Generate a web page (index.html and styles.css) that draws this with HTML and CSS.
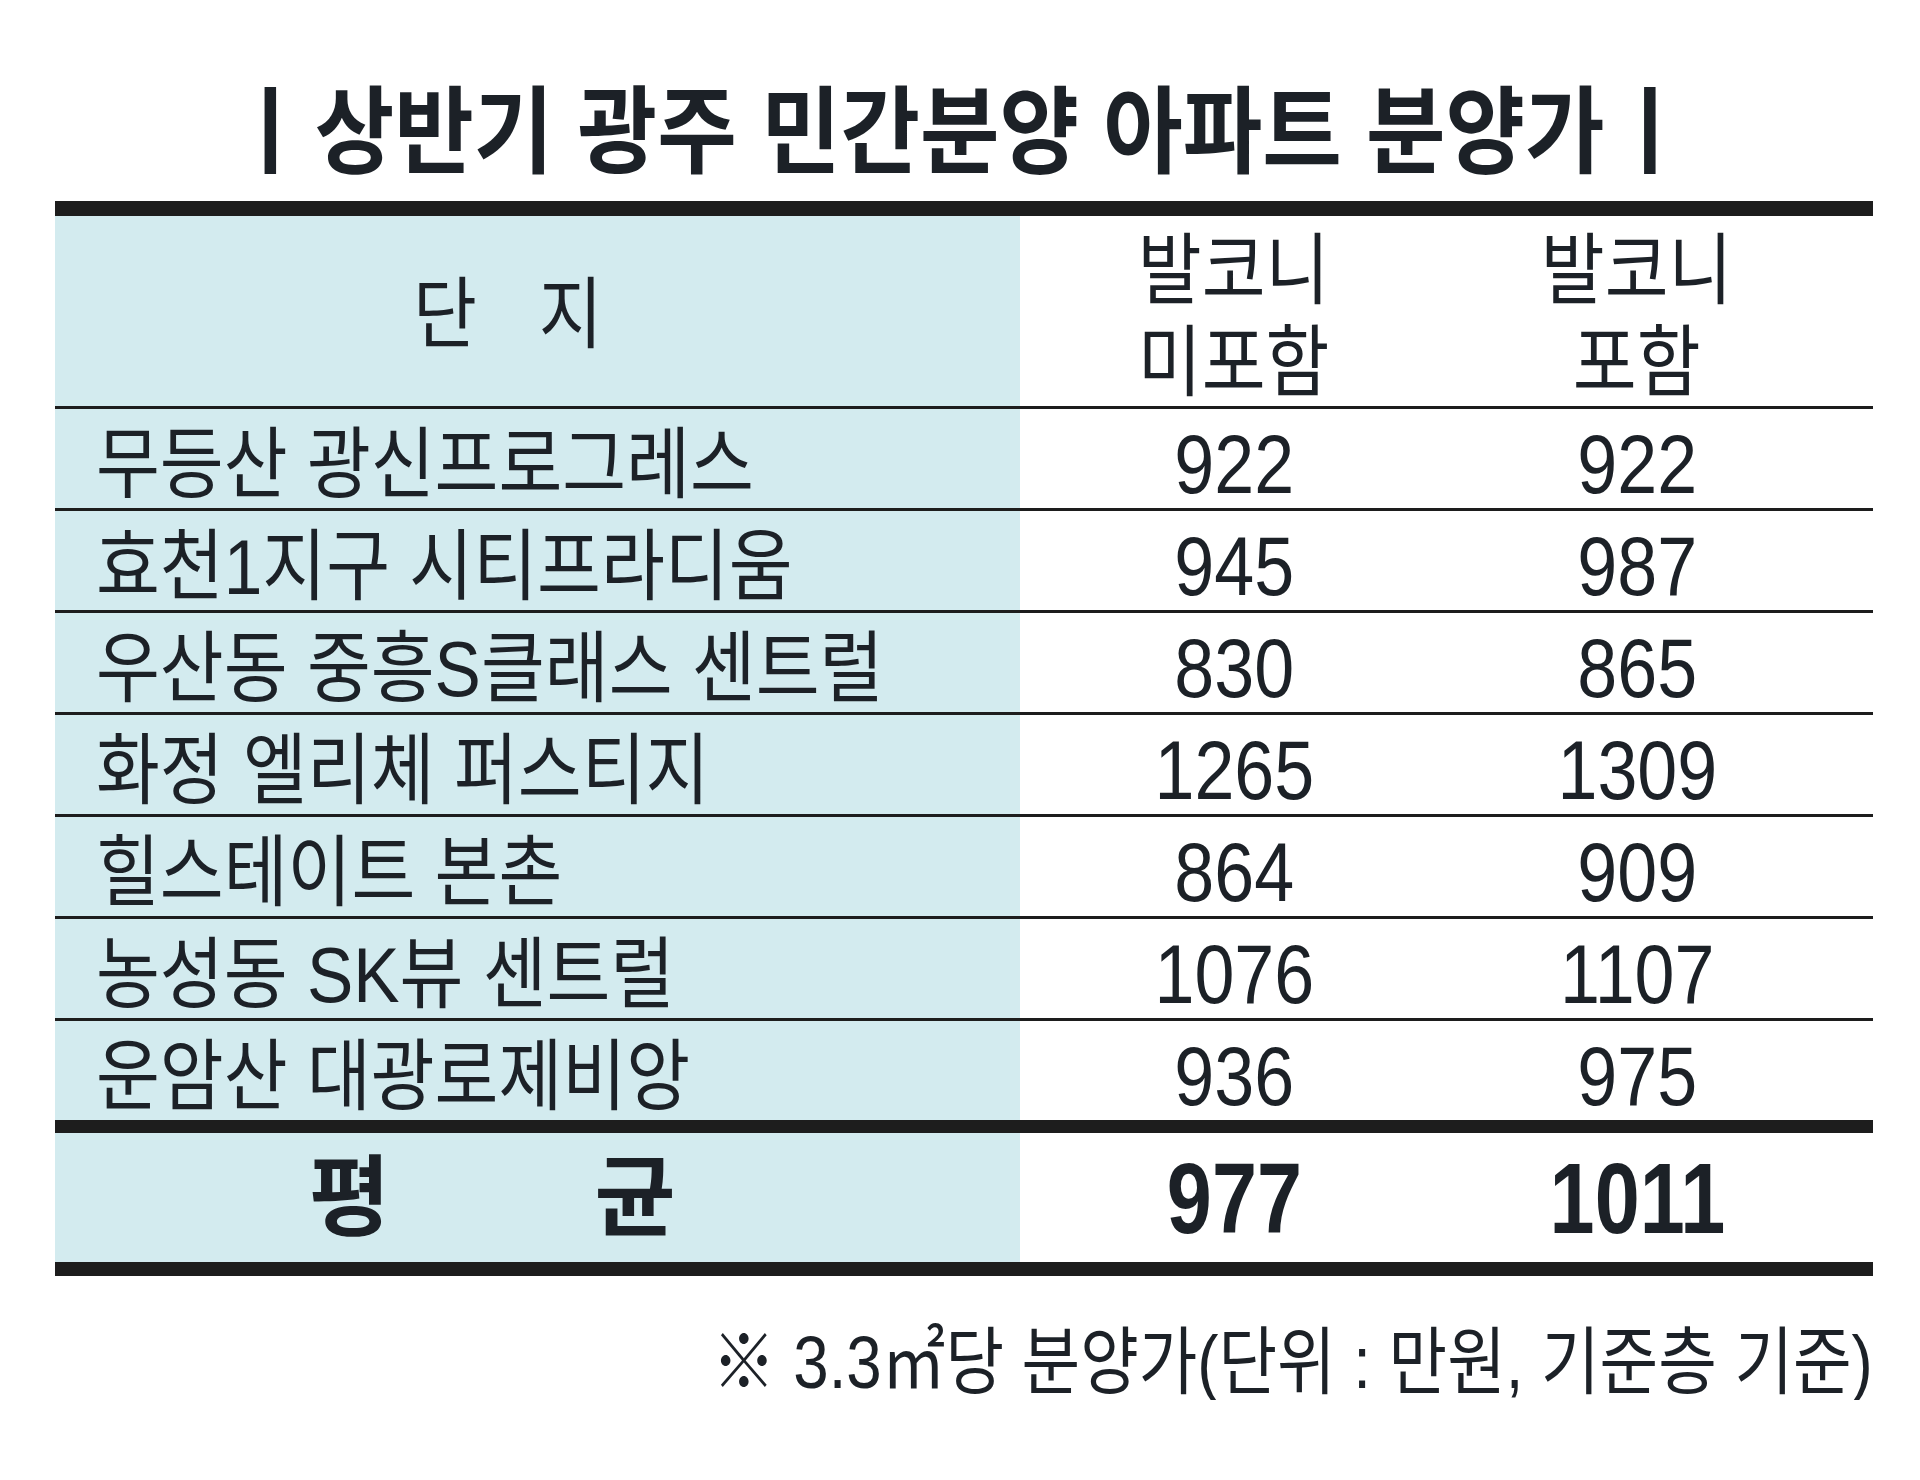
FILE: index.html
```html
<!DOCTYPE html>
<html lang="ko">
<head>
<meta charset="utf-8">
<title>상반기 광주 민간분양 아파트 분양가</title>
<link rel="stylesheet" href="styles.css">
</head>
<body>
<div class="title-wrap">
  <h1 class="title"><span class="bar">ㅣ </span>상반기 광주 민간분양 아파트 분양가<span class="bar"> ㅣ</span></h1>
</div>
<div class="table">
  <div class="row head">
    <div class="cell name"><span class="txt spaced">단 지</span></div>
    <div class="cell val"><span class="txt two">발코니<br>미포함</span></div>
    <div class="cell val v2"><span class="txt two">발코니<br>포함</span></div>
  </div>
  <div class="row">
    <div class="cell name"><span class="txt">무등산 광신프로그레스</span></div>
    <div class="cell val"><span class="num">922</span></div>
    <div class="cell val v2"><span class="num">922</span></div>
  </div>
  <div class="row">
    <div class="cell name"><span class="txt">효천1지구 시티프라디움</span></div>
    <div class="cell val"><span class="num">945</span></div>
    <div class="cell val v2"><span class="num">987</span></div>
  </div>
  <div class="row">
    <div class="cell name"><span class="txt">우산동 중흥S클래스 센트럴</span></div>
    <div class="cell val"><span class="num">830</span></div>
    <div class="cell val v2"><span class="num">865</span></div>
  </div>
  <div class="row">
    <div class="cell name"><span class="txt">화정 엘리체 퍼스티지</span></div>
    <div class="cell val"><span class="num">1265</span></div>
    <div class="cell val v2"><span class="num">1309</span></div>
  </div>
  <div class="row">
    <div class="cell name"><span class="txt">힐스테이트 본촌</span></div>
    <div class="cell val"><span class="num">864</span></div>
    <div class="cell val v2"><span class="num">909</span></div>
  </div>
  <div class="row">
    <div class="cell name"><span class="txt">농성동 SK뷰 센트럴</span></div>
    <div class="cell val"><span class="num">1076</span></div>
    <div class="cell val v2"><span class="num">1107</span></div>
  </div>
  <div class="row last">
    <div class="cell name"><span class="txt">운암산 대광로제비앙</span></div>
    <div class="cell val"><span class="num">936</span></div>
    <div class="cell val v2"><span class="num">975</span></div>
  </div>
  <div class="row total">
    <div class="cell name"><span class="avg">평 균</span></div>
    <div class="cell val"><span class="num bold">977</span></div>
    <div class="cell val v2"><span class="num bold">1011</span></div>
  </div>
</div>
<p class="note"><span class="note-t">※ 3.3㎡당 분양가(단위 : 만원, 기준층 기준)</span></p>
</body>
</html>
```
FILE: styles.css
```css
html, body {
  margin: 0;
  padding: 0;
  background: #ffffff;
}
body {
  color: #1c2127;
  font-family: "Liberation Sans", "Noto Sans CJK KR", sans-serif;
}
.title-wrap {
  height: 201px;
  box-sizing: border-box;
  padding-top: 77px;
  text-align: center;
}
.title {
  display: inline-block;
  margin: 0;
  font-family: "Noto Sans CJK KR", sans-serif;
  font-weight: 700;
  font-size: 95px;
  line-height: 1;
  white-space: nowrap;
  transform: scaleX(0.91);
}
.bar {
  word-spacing: -21px;
}
.table {
  margin-left: 55px;
  width: 1818px;
  border-top: 15px solid #1d1d1d;
  border-bottom: 14px solid #1d1d1d;
}
.row {
  display: grid;
  grid-template-columns: 965px 428px 425px;
  grid-template-rows: 100%;
  height: 99px;
  border-bottom: 3px solid #1d1d1d;
}
.row.head {
  height: 190px;
}
.row.last {
  border-bottom: 13px solid #1d1d1d;
}
.row.total {
  height: 129px;
  border-bottom: 0;
}
.cell {
  display: flex;
  align-items: center;
  box-sizing: border-box;
  padding-top: 12px;
  min-height: 0;
}
.name {
  background: #d3ebef;
  padding-left: 41px;
}
.head .cell {
  padding-top: 12px;
}
.head .name {
  padding-top: 8px;
  padding-left: 358px;
}
.total .cell {
  padding-top: 0;
}
.total .name {
  padding-left: 254px;
}
.val {
  justify-content: center;
}
.v2 {
  padding-right: 47px;
}
.txt {
  display: inline-block;
  font-size: 78px;
  line-height: 1;
  white-space: nowrap;
  transform: scaleX(0.89);
  transform-origin: left center;
}
.val .txt {
  transform-origin: center center;
  text-align: center;
}
.txt.two {
  line-height: 92px;
}
.txt.spaced {
  word-spacing: 48px;
}
.num {
  display: inline-block;
  font-size: 83px;
  line-height: 1;
  transform: scaleX(0.865);
}
.num.bold {
  font-weight: 700;
  font-size: 100px;
  transform: scaleX(0.81);
}
.avg {
  display: inline-block;
  font-weight: 700;
  font-size: 88px;
  line-height: 1;
  white-space: nowrap;
  word-spacing: 180px;
  transform-origin: left center;
}
.note {
  margin: 50px 47px 0 0;
  text-align: right;
}
.note-t {
  display: inline-block;
  font-size: 74px;
  line-height: 1;
  white-space: nowrap;
  transform: scaleX(0.86);
  transform-origin: right center;
}
```
